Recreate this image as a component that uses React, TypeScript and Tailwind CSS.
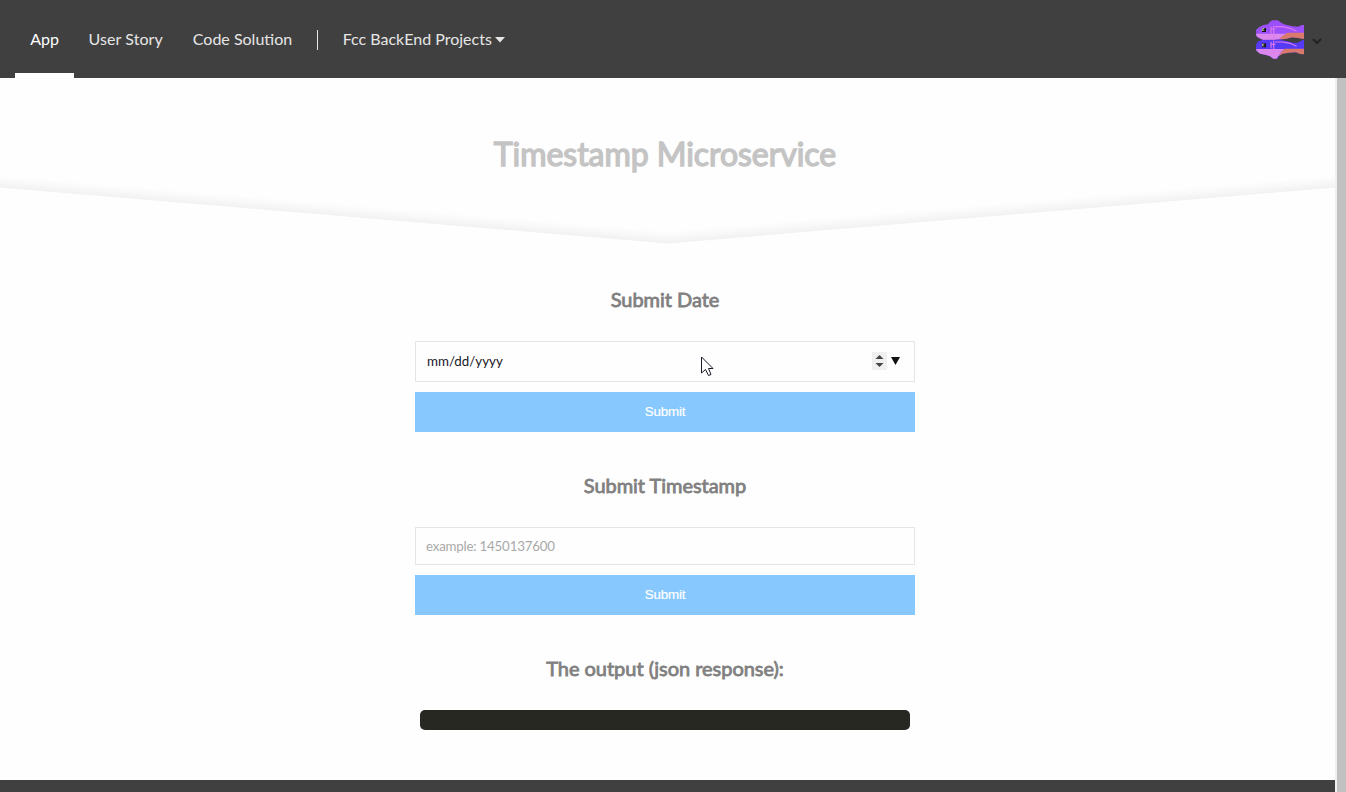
import React from "react";

function FishAvatar() {
  return (
    <svg width="48" height="39" viewBox="12 12 144 117">
      <path d="M12 42 22 33 34 27 48 25 53 18 61 13H77L89 21 101 26 122 31 138 32 150 27H156V69L140 66 122 64 100 69 84 71H30L14 62Z" fill="#9b50fb" />
      <path d="M12 53H108L92 61 84 68 66 71H34L18 64 12 57Z" fill="#dc87ec" />
      <path d="M106 50H156V69L140 66 120 64 100 69H82L92 60Z" fill="#d9796b" />
      <path d="M12 86 18 76 32 72H86L104 75 122 80 138 80 152 72H156V115L144 114 132 109 112 110 92 113 80 121 76 128H64L54 121 42 117 24 113 12 102Z" fill="#5439f5" />
      <path d="M12 99H98L88 108 78 122 74 128H64L54 121 42 117 24 113 14 105Z" fill="#dc87ec" />
      <path d="M98 98H156V115L144 114 132 109 112 110 92 113 80 121 88 108Z" fill="#d9796b" />
      <path d="M57 32V53M65 29V69M57 39H70M69 32H92L114 37 134 46M57 77V97M65 74V113M57 85H70M69 78H92L114 82 134 91" fill="none" stroke="#df78ef" strokeWidth="3.5" />
      <path d="M30 36H42V48H30ZM30 82H42V94H30Z" fill="#111" />
      <path d="M31 37H37V45H31ZM31 83H37V91H31Z" fill="#e9eddc" />
      <path d="M34 39H38V44H34ZM34 85H38V90H34Z" fill="#111" />
    </svg>
  );
}

function Heading({ children }: { children: React.ReactNode }) {
  return (
    <h2 className="-mt-px mb-px h-[30px] whitespace-nowrap text-center text-[20px] leading-[30px] tracking-[-0.03px] text-[#808080] [-webkit-text-stroke:0.8px_#808080]">
      {children}
    </h2>
  );
}

function Submit() {
  return (
    <button className="mt-[10px] flex h-10 w-full items-center justify-center bg-[#87c8ff] font-['Liberation_Sans',sans-serif] text-[13.33px] leading-[18px] tracking-[-0.15px] text-white [-webkit-text-stroke:0.2px_white]">
      Submit
    </button>
  );
}

export default function App() {
  return (
    <div className="relative flex h-[792px] w-[1346px] flex-col overflow-hidden bg-[#fefefe] font-[Lato,sans-serif]">
      <header className="flex h-[78px] shrink-0 items-stretch bg-[#404040] pl-[15px] text-base leading-[78px] text-[#e6e6e6]">
        <a className="h-[78px] w-[59px] border-b-[5px] border-white text-center text-white">App</a>
        <a className="ml-[14.5px] pr-[15px] tracking-[0.08px] whitespace-nowrap">User Story</a>
        <a className="ml-[15px] pr-[15px] whitespace-nowrap">Code Solution</a>
        <div className="ml-[10px] mt-[2px] h-5 w-px self-center bg-[#e6e6e6]" />
        <a className="ml-[24.5px] flex items-center whitespace-nowrap">
          Fcc BackEnd Projects
          <svg className="ml-[3px] mt-[1px]" width="10" height="6" viewBox="0 0 10 6"><path d="M0 0H10L5 5.5Z" fill="#e6e6e6" /></svg>
        </a>
        <div className="ml-auto flex items-center pr-[24px] pt-[1px]">
          <FishAvatar />
          <svg className="ml-[8px] mt-[3px]" width="10" height="7" viewBox="0 0 10 7"><path d="M1 1 5 5 9 1" fill="none" stroke="#222" strokeWidth="2" /></svg>
        </div>
      </header>
      <div className="flex min-h-0 flex-1">
        <main className="flex w-[1335px] shrink-0 flex-col">
          <section className="relative h-[165px] shrink-0 pt-[51px]">
            <svg className="absolute left-0 top-[90px]" width="1335" height="76" viewBox="0 0 1335 76">
              <defs>
                <linearGradient id="left" gradientUnits="userSpaceOnUse" x1="0" y1="19" x2="1" y2="7">
                  <stop offset="0" stopColor="#f2f2f2" /><stop offset="0.5" stopColor="#f9f9f9" /><stop offset="1" stopColor="#fefefe" />
                </linearGradient>
                <linearGradient id="right" gradientUnits="userSpaceOnUse" x1="1335" y1="19" x2="1334" y2="7">
                  <stop offset="0" stopColor="#f2f2f2" /><stop offset="0.5" stopColor="#f9f9f9" /><stop offset="1" stopColor="#fefefe" />
                </linearGradient>
              </defs>
              <path d="M0 4V19.5L668 75.5V60Z" fill="url(#left)" />
              <path d="M1335 4V19.5L668 75.5V60Z" fill="url(#right)" />
            </svg>
            <h1 className="relative h-[50px] whitespace-nowrap pr-[5px] text-center text-[32px] leading-[50px] tracking-[-0.05px] text-[#c4c4c4] [-webkit-text-stroke:1.4px_#c4c4c4]">Timestamp Microservice</h1>
          </section>
          <div className="ml-[415px] flex w-[500px] flex-col pt-[42px]">
            <Heading>Submit Date</Heading>
            <div className="mt-[26px] flex h-[41px] items-center border border-[#e5e5e5] pl-[11px] pr-[14px] text-[13.33px] text-[#181827]">
              <span className="grow">mm/dd/yyyy</span>
              <svg className="-mt-px mr-[4px]" width="15" height="18" viewBox="0 0 15 18"><path fill="#f0f0f0" d="M0 0H15V18H0Z" /><path fill="#444" d="M3.5 7 7.5 3 11.5 7ZM3.5 11H11.5L7.5 15Z" /></svg>
              <svg className="-mt-px" width="9" height="8" viewBox="0 0 9 8"><path d="M0 0H9L4.5 8Z" fill="#111" /></svg>
            </div>
            <Submit />
            <div className="h-[39px]" />
            <Heading>Submit Timestamp</Heading>
            <div className="mt-[26px] flex h-[38px] items-center border border-[#e5e5e5] pl-[10px] pt-px text-[13.33px] tracking-[-0.22px] text-[#a9a9a9]">example: 1450137600</div>
            <Submit />
            <div className="h-[39px]" />
            <Heading>The output (json response):</Heading>
            <div className="mx-[5px] mt-[26px] h-5 rounded-[5px] bg-[#272822]" />
          </div>
          <footer className="mt-auto h-3 shrink-0 bg-[#404040]" />
        </main>
        <div className="w-[2px] bg-[#f0f0f0]" />
        <div className="w-[9px] bg-[#c1c1c1]" />
      </div>
      <svg className="absolute left-[701px] top-[356px]" width="13" height="21" viewBox="0 0 13 21"><path d="M.5 1V17L4.5 13.5 7.5 19.5 10 18.5 7.5 12.5H12Z" fill="#fff" stroke="#181827" /></svg>
    </div>
  );
}
